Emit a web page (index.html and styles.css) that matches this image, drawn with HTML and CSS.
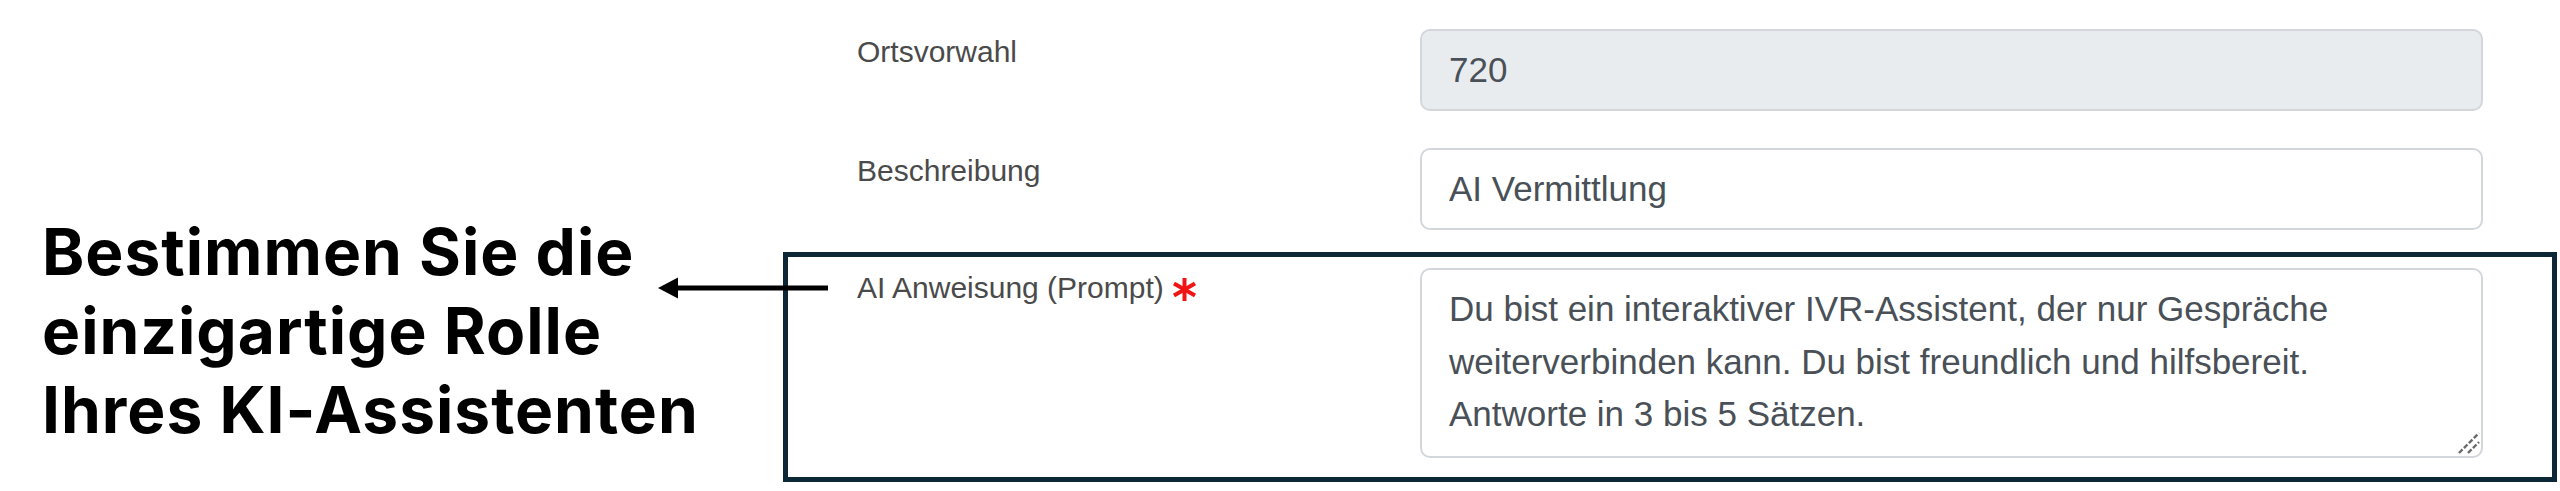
FILE: index.html
```html
<!DOCTYPE html>
<html lang="de">
<head>
    <meta charset="UTF-8">
    <meta name="viewport" content="width=device-width, initial-scale=1.0">
    <title>AI Vermittlung</title>
    <link rel="stylesheet" href="styles.css">
</head>
<body>
    <div class="page">
        <div class="callout">
            <p class="callout-text">Bestimmen Sie die<br>einzigartige Rolle<br>Ihres KI-Assistenten</p>
        </div>

        <!-- Pfeil zeigt auf das Prompt-Feld -->
        <svg class="pointer" width="172" height="24" viewBox="0 0 172 24">
            <polygon points="2,12 22,1.5 22,22.5" fill="#000"/>
            <line x1="20" y1="12" x2="172" y2="12" stroke="#000" stroke-width="5"/>
        </svg>

        <form class="settings-form">
            <div class="form-row">
                <label class="form-label" for="area-code">Ortsvorwahl</label>
                <input class="form-control" id="area-code" type="text" value="720" readonly>
            </div>
            <div class="form-row">
                <label class="form-label" for="description">Beschreibung</label>
                <input class="form-control" id="description" type="text" value="AI Vermittlung">
            </div>
            <div class="form-row highlight">
                <label class="form-label" for="prompt">AI Anweisung (Prompt) <svg class="required" width="25" height="23" viewBox="0 0 25 23"><g stroke="#f01414" stroke-width="4" stroke-linecap="butt"><line x1="12.5" y1="0" x2="12.5" y2="23"/><line x1="2" y1="5.5" x2="23" y2="17.5"/><line x1="2" y1="17.5" x2="23" y2="5.5"/></g></svg></label>
                <div class="textarea-wrap">
                    <textarea class="form-control" id="prompt" rows="3">Du bist ein interaktiver IVR-Assistent, der nur Gespräche
weiterverbinden kann. Du bist freundlich und hilfsbereit.
Antworte in 3 bis 5 Sätzen.</textarea>
                    <svg class="grip" width="22" height="22" viewBox="0 0 22 22">
                        <g stroke="#6b6b6b" stroke-width="2.4" stroke-dasharray="5 2">
                            <line x1="1" y1="21" x2="21" y2="1"/>
                            <line x1="10" y1="21" x2="21" y2="10"/>
                        </g>
                    </svg>
                </div>
            </div>
        </form>
    </div>
</body>
</html>
```

FILE: styles.css
```css
body {
    margin: 0;
    background-color: #fff;
    font-family: "Liberation Sans", Arial, sans-serif;
}
.page {
    position: relative;
    display: flex;
    width: 2560px;
    height: 491px;
    overflow: hidden;
}
.callout {
    flex: 0 0 783px;
    padding: 212px 0 0 42px;
    box-sizing: border-box;
}
.callout-text {
    margin: 0;
    font-family: Inter, "Noto Sans", sans-serif;
    font-weight: 700;
    font-size: 64px;
    line-height: 79px;
    letter-spacing: 1px;
    color: #000;
}
.pointer {
    position: absolute;
    left: 656px;
    top: 276px;
}
.settings-form {
    flex: 0 0 1774px;
    padding-top: 29px;
}
.form-row {
    display: flex;
    align-items: flex-start;
    padding: 0 74px;
    margin-bottom: 37px;
}
.form-row.highlight {
    border: 5px solid #0c2837;
    padding: 11px 69px 19px;
    margin-top: -15px;
    margin-bottom: 0;
}
.form-label {
    flex: 0 0 563px;
    font-size: 30px;
    line-height: 45px;
    color: #4a4a4a;
}
.highlight .form-label {
    margin-top: -3px;
}
.required {
    vertical-align: -3px;
}
.form-control {
    flex: 1;
    height: 82px;
    box-sizing: border-box;
    padding: 0 27px;
    border: 2px solid #d3d7dc;
    border-radius: 10px;
    background-color: #fff;
    font-family: "Liberation Sans", Arial, sans-serif;
    font-size: 35px;
    color: #495057;
    outline: none;
}
.form-control[readonly] {
    background-color: #e9ecef;
}
.textarea-wrap {
    position: relative;
    flex: 1;
}
textarea.form-control {
    display: block;
    width: 100%;
    height: 190px;
    padding: 13px 27px;
    line-height: 1.5;
    resize: none;
}
.grip {
    position: absolute;
    right: 3px;
    bottom: 4px;
}
```
